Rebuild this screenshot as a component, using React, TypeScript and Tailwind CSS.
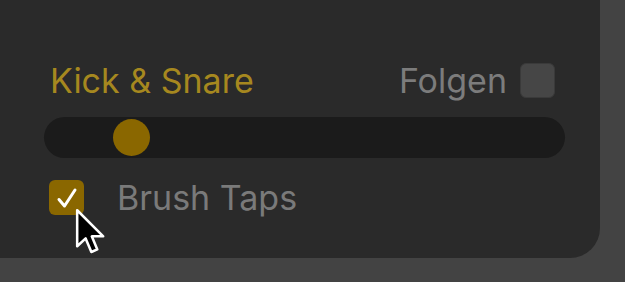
import React from "react";

export default function App() {
  return (
    <div className="w-[625px] h-[282px] bg-[#434343] overflow-hidden" style={{ fontFamily: "Inter, 'Noto Sans', sans-serif" }}>
      <div className="relative w-[600px] h-[258px] bg-[#2a2a2a] rounded-br-[30px] pt-[63px] pl-[44px] pr-[35px]">
        <div className="flex items-center justify-between h-[35px] pl-[6px] pr-[10px]">
          <span className="text-[34px] leading-none text-[#a6881f]">Kick &amp; Snare</span>
          <div className="flex items-center gap-[13px]">
            <span className="text-[34px] leading-none text-[#7c7c7c]">Folgen</span>
            <div className="w-[35px] h-[35px] rounded-[6px] bg-[#464646] border border-[#3a3a3a]" />
          </div>
        </div>
        <div className="mt-[19px] h-[41px] rounded-full bg-[#1b1b1b] flex items-center pl-[69px]">
          <div className="w-[37px] h-[37px] rounded-full bg-[#8a6700]" />
        </div>
        <div className="mt-[22px] flex items-center pl-[5px] gap-[33px]">
          <div className="w-[35px] h-[35px] rounded-[6px] bg-[#8a6700] flex items-center justify-center">
            <svg width="24" height="24" viewBox="0 0 24 24" fill="none">
              <path d="M4 13.5 L9.5 20 L20 4" stroke="#ffffff" strokeWidth="3" strokeLinecap="round" strokeLinejoin="round" />
            </svg>
          </div>
          <span className="text-[34px] leading-none text-[#7a7a7a]">Brush Taps</span>
        </div>
        <svg className="absolute left-[74px] top-[207px]" width="36" height="51" viewBox="0 0 17 24">
          <path d="M1.5 1.5 L1.5 18.5 L5.5 14.8 L8.2 21.2 L11 20 L8.4 13.8 L13.8 13.8 Z" fill="#000000" stroke="#ffffff" strokeWidth="1.2" strokeLinejoin="round" />
        </svg>
      </div>
    </div>
  );
}
